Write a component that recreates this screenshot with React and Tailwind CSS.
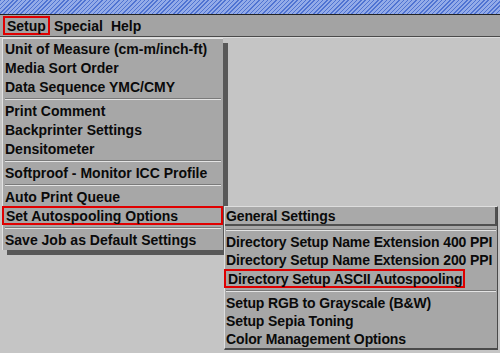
import React from "react";

const mainItems = [
  { label: "Unit of Measure (cm-m/inch-ft)" },
  { label: "Media Sort Order" },
  { label: "Data Sequence YMC/CMY" },
  { sep: true },
  { label: "Print Comment" },
  { label: "Backprinter Settings" },
  { label: "Densitometer" },
  { sep: true },
  { label: "Softproof - Monitor ICC Profile" },
  { sep: true },
  { label: "Auto Print Queue" },
  { label: "Set Autospooling Options", boxed: true },
  { sep: true },
  { label: "Save Job as Default Settings" },
];

const subItems = [
  { label: "Directory Setup Name Extension 400 PPI" },
  { label: "Directory Setup Name Extension 200 PPI" },
  { label: "Directory Setup ASCII Autospooling", boxed: true },
  { sep: true },
  { label: "Setup RGB to Grayscale (B&W)" },
  { label: "Setup Sepia Toning" },
  { label: "Color Management Options" },
];

function Separator({ className }) {
  return (
    <div className={`flex items-center ${className}`}>
      <div className="w-full border-t border-[#7a7a7a] border-b border-b-[#e4e4e4]" />
    </div>
  );
}

export default function App() {
  return (
    <div className="w-[500px] h-[353px] overflow-hidden flex flex-col bg-[#c5c5c5] font-['Liberation_Sans',Arial,sans-serif] font-bold text-[14px] text-[#0a0a0a] leading-none whitespace-nowrap">
      {/* title stripe */}
      <div className="h-[15px] shrink-0 border-b border-[#222] bg-[repeating-linear-gradient(135deg,#4f73d2_0px,#4f73d2_1px,#93abe8_1px,#93abe8_3px)]" />

      {/* menu bar */}
      <div className="h-[22px] shrink-0 bg-[#a3a3a3] border-b border-[#4a4a4a] flex items-center pl-[3px]">
        <span className="h-[19px] px-[2px] flex items-center border-2 border-[#e00000]">Setup</span>
        <span className="ml-[4px]">Special</span>
        <span className="ml-[8px]">Help</span>
      </div>

      {/* workspace */}
      <div className="relative flex-1 border-t border-[#dcdcdc]">
        {/* Setup menu */}
        <div className="absolute left-[2px] top-0 w-[221px] bg-[#a7a7a7] border-t border-l border-[#e2e2e2] shadow-[5px_5px_0_0_#585858] pb-[1px]">
          {mainItems.map((item, i) =>
            item.sep ? (
              <Separator key={i} className="h-[5px] px-[2px]" />
            ) : item.boxed ? (
              <div key={i} className="h-[19px] flex items-center -ml-[1px]">
                <span className="h-[19px] w-[221px] pl-[2px] flex items-center border-2 border-[#e00000]">
                  {item.label}
                </span>
              </div>
            ) : (
              <div key={i} className="h-[19px] flex items-center pl-[2px]">
                {item.label}
              </div>
            )
          )}
        </div>

        {/* Autospooling submenu */}
        <div className="absolute left-[224px] top-[168px] w-[274px] bg-[#a7a7a7] border-l border-t border-[#dedede] border-b-2 border-b-[#4a4a4a] border-r border-r-[#4a4a4a] tracking-[-0.12px]">
          <div className="h-[19px] flex items-center pl-[1px] border-r-2 border-b-2 border-[#505050] bg-[#a9a9a9]">
            General Settings
          </div>
          <Separator className="h-[7px] px-[1px]" />
          {subItems.map((item, i) =>
            item.sep ? (
              <Separator key={i} className="h-[6px] px-[1px]" />
            ) : item.boxed ? (
              <div key={i} className="h-[19px] flex items-center -ml-[1px]">
                <span className="h-[19px] w-[241px] pl-[2px] flex items-center border-2 border-[#e00000]">
                  {item.label}
                </span>
              </div>
            ) : (
              <div key={i} className="h-[18px] flex items-center pl-[1px]">
                {item.label}
              </div>
            )
          )}
        </div>
      </div>
    </div>
  );
}
